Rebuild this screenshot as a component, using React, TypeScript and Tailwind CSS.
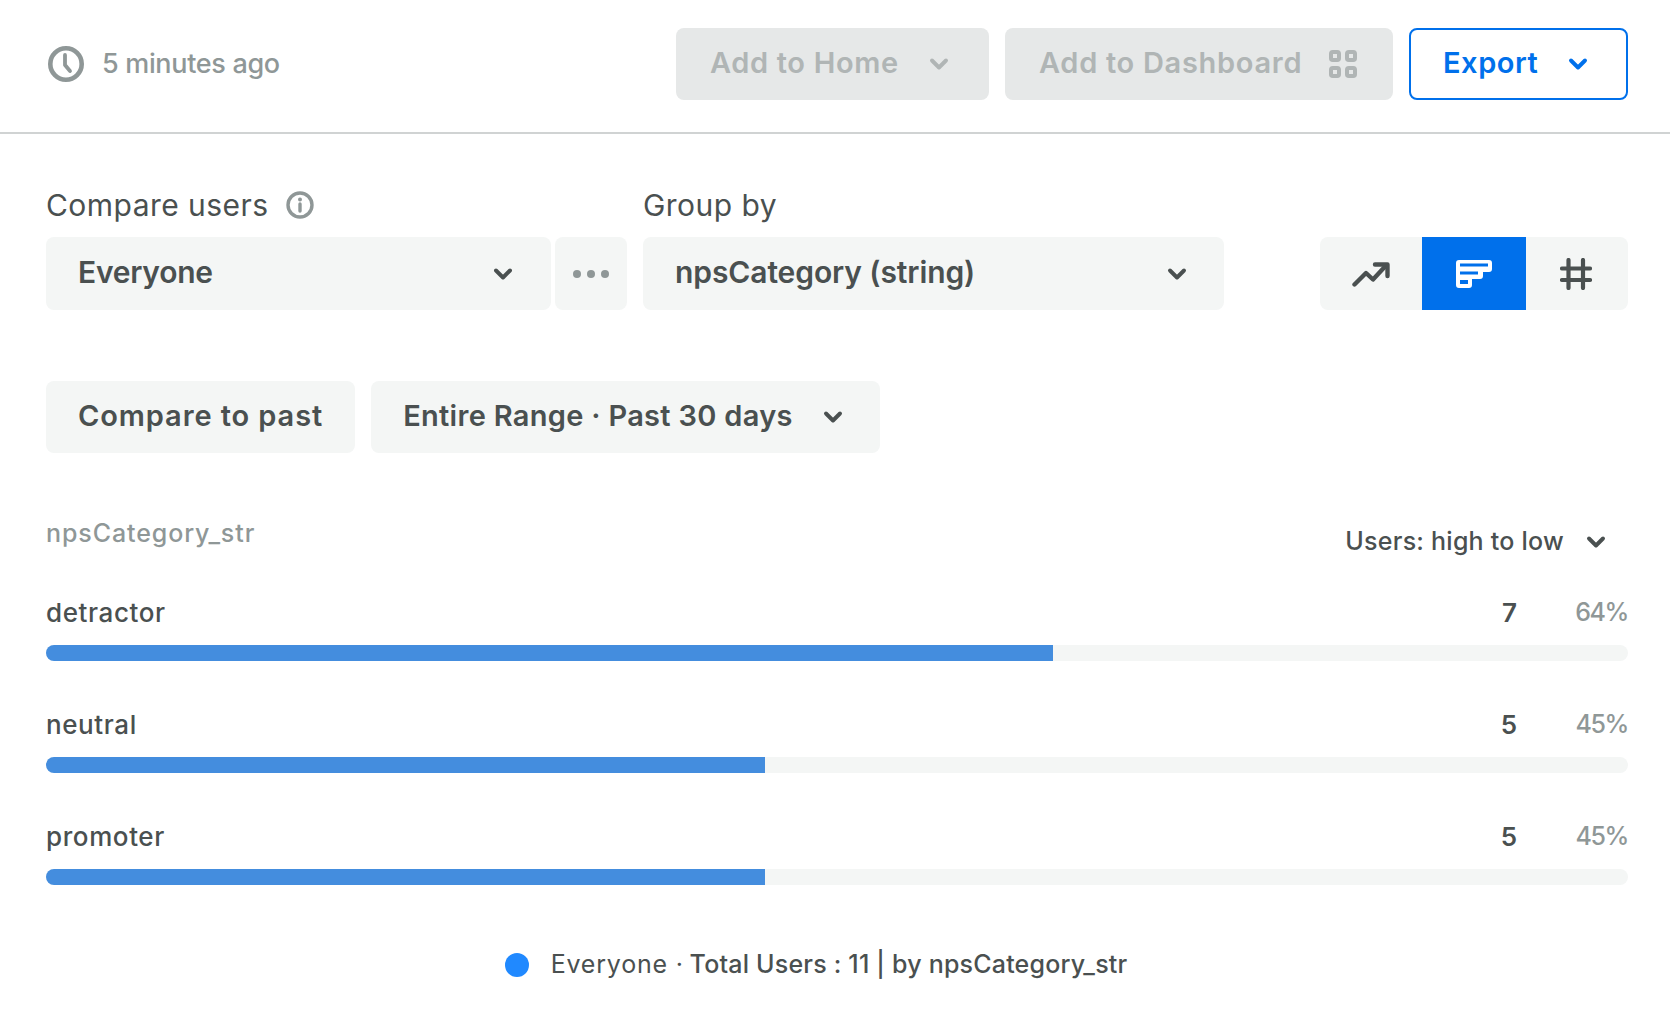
import React from "react";

const Chevron = ({ className = "" }: { className?: string }) => (
  <svg width="20" height="14" viewBox="0 0 20 14" fill="none" className={className}>
    <path d="M3 3.5 L10 10.5 L17 3.5" stroke="currentColor" strokeWidth="3.9" strokeLinecap="round" strokeLinejoin="round" />
  </svg>
);

const Row = ({ label, value, pct, width }: { label: string; value: string; pct: string; width: number }) => (
  <div className="mb-[47px]">
    <div className="flex items-center h-[32px] mb-[17px] text-[26px] text-[#4a5050] font-medium">
      <span className="tracking-[0.6px]">{label}</span>
      <span className="ml-auto w-[30px] text-right font-semibold">{value}</span>
      <span className="w-[111px] pt-[2px] text-right text-[25px] tracking-[-1.4px] text-[#8f9797]">{pct}</span>
    </div>
    <div className="h-[16px] rounded-full bg-[#f4f6f5] overflow-hidden">
      <div className="h-full bg-[#448dde]" style={{ width: `${width}%` }} />
    </div>
  </div>
);

export default function App() {
  return (
    <div className="w-full h-[1010px] bg-white overflow-hidden font-['Inter',sans-serif] text-[#4a5050]">
      <header className="flex items-center h-[134px] pl-[48px] pr-[42px] pb-[4px] border-b-2 border-[#d0d3d3]">
        <svg width="36" height="36" viewBox="0 0 36 36" fill="none" className="text-[#8f9797]">
          <circle cx="18" cy="18" r="15.7" stroke="currentColor" strokeWidth="4.6" />
          <path d="M17 9 V19 L22 25" stroke="currentColor" strokeWidth="3.8" strokeLinecap="round" strokeLinejoin="round" />
        </svg>
        <span className="ml-[18px] text-[27px] tracking-[-0.33px] text-[#8f9797] font-medium">5 minutes ago</span>
        <button className="ml-auto flex items-center h-[72px] w-[313px] pl-[34px] pb-[2px] rounded-[8px] bg-[#e6e8e8] text-[#b0b5b5] text-[29px] tracking-[0.65px] font-semibold">
          <span>Add to Home</span>
          <Chevron className="ml-auto mr-[40px] mt-[2px]" />
        </button>
        <button className="ml-[16px] flex items-center h-[72px] w-[388px] pl-[34px] pb-[2px] rounded-[8px] bg-[#e6e8e8] text-[#b0b5b5] text-[29px] tracking-[0.7px] font-semibold">
          <span>Add to Dashboard</span>
          <svg width="28" height="28" viewBox="0 0 28 28" fill="none" className="ml-auto mr-[36px] mt-[2px]">
            <rect x="2" y="2" width="8" height="8" rx="1.8" stroke="currentColor" strokeWidth="4" />
            <rect x="18" y="2" width="8" height="8" rx="1.8" stroke="currentColor" strokeWidth="4" />
            <rect x="2" y="18" width="8" height="8" rx="1.8" stroke="currentColor" strokeWidth="4" />
            <rect x="18" y="18" width="8" height="8" rx="1.8" stroke="currentColor" strokeWidth="4" />
          </svg>
        </button>
        <button className="ml-[16px] flex items-center h-[72px] w-[219px] pl-[32px] pb-[2px] rounded-[8px] border-2 border-[#0070eb] bg-white text-[#0070eb] text-[29px] tracking-[0.55px] font-semibold">
          <span>Export</span>
          <Chevron className="ml-auto mr-[38px] mt-[2px]" />
        </button>
      </header>

      <main className="pl-[46px] pr-[42px]">
        <div className="flex pt-[53px]">
          <div className="w-[581px]">
            <div className="flex items-center h-[36px] mb-[14px] text-[30px] tracking-[0.45px]">
              <span>Compare users</span>
              <svg width="28" height="28" viewBox="0 0 28 28" fill="none" className="ml-[18px] text-[#8f9797]">
                <circle cx="14" cy="14" r="12" stroke="currentColor" strokeWidth="3.4" />
                <circle cx="14" cy="8.5" r="2" fill="currentColor" />
                <path d="M14 13 V20" stroke="currentColor" strokeWidth="3.4" strokeLinecap="round" />
              </svg>
            </div>
            <div className="flex gap-[4px]">
              <div className="flex items-center flex-1 h-[73px] pl-[32px] pr-[38px] pb-[2px] rounded-[8px] bg-[#f4f6f5] text-[30px] tracking-[-0.25px] font-semibold">
                <span>Everyone</span>
                <Chevron className="ml-auto mt-[2px]" />
              </div>
              <div className="flex items-center justify-center gap-[6px] w-[72px] h-[73px] rounded-[8px] bg-[#f4f6f5]">
                <span className="w-[8px] h-[8px] rounded-full bg-[#8f9797]" />
                <span className="w-[8px] h-[8px] rounded-full bg-[#8f9797]" />
                <span className="w-[8px] h-[8px] rounded-full bg-[#8f9797]" />
              </div>
            </div>
          </div>
          <div className="w-[581px] ml-[16px]">
            <div className="flex items-center h-[36px] mb-[14px] text-[30px] tracking-[0.45px]">Group by</div>
            <div className="flex items-center h-[73px] pl-[32px] pr-[37px] pb-[2px] rounded-[8px] bg-[#f4f6f5] text-[30px] tracking-[-0.1px] font-semibold">
              <span>npsCategory (string)</span>
              <Chevron className="ml-auto mt-[2px]" />
            </div>
          </div>
          <div className="ml-auto self-end flex w-[308px] h-[73px] rounded-[8px] bg-[#f4f6f5] overflow-hidden">
            <div className="flex items-center justify-center w-[102px]">
              <svg width="38" height="26" viewBox="0 0 38 26" fill="none">
                <path d="M2.5 23.5 L14 12 L21 18.5 L34 4.5" stroke="#4a5050" strokeWidth="4.4" strokeLinecap="round" strokeLinejoin="round" />
                <path d="M23 3.5 H35.5 V15" stroke="#4a5050" strokeWidth="4.4" strokeLinecap="round" strokeLinejoin="round" />
              </svg>
            </div>
            <div className="flex items-center justify-center w-[104px] bg-[#0070eb]">
              <svg width="36" height="28" viewBox="0 0 36 28" fill="none">
                <path d="M3 0 H33 Q36 0 36 3 V9 Q36 12 33 12 H27 V16 Q27 19 24 19 H16 V25 Q16 28 13 28 H3 Q0 28 0 25 V3 Q0 0 3 0 Z" fill="#ffffff" />
                <rect x="4" y="3.5" width="28" height="3" fill="#0070eb" />
                <rect x="4" y="11.5" width="18" height="3" fill="#0070eb" />
                <rect x="4" y="20" width="8" height="4" fill="#0070eb" />
              </svg>
            </div>
            <div className="flex items-center justify-center flex-1 pr-[2px]">
              <svg width="32" height="32" viewBox="0 0 32 32" fill="none">
                <path d="M8.5 2 V30 M23 2 V30 M2 10.5 H30 M2 22 H30" stroke="#4a5050" strokeWidth="4.2" strokeLinecap="round" />
              </svg>
            </div>
          </div>
        </div>

        <div className="flex gap-[16px] mt-[71px]">
          <div className="flex items-center h-[72px] px-[32px] pb-[2px] rounded-[8px] bg-[#f4f6f5] text-[29px] tracking-[0.9px] font-semibold">Compare to past</div>
          <div className="flex items-center h-[72px] w-[509px] pl-[32px] pr-[37px] pb-[2px] rounded-[8px] bg-[#f4f6f5] text-[29px] tracking-[0.3px] font-semibold">
            <span>Entire Range · Past 30 days</span>
            <Chevron className="ml-auto mt-[2px]" />
          </div>
        </div>

        <div className="flex items-start justify-between mt-[64px] mb-[38px]">
          <span className="h-[32px] leading-[32px] text-[25px] tracking-[0.9px] text-[#8f9797] font-medium">npsCategory_str</span>
          <div className="flex items-center h-[32px] mt-[9px] pr-[22px] text-[25px] tracking-[0.24px] font-medium">
            <span>Users: high to low</span>
            <Chevron className="ml-[22px]" />
          </div>
        </div>

        <Row label="detractor" value="7" pct="64%" width={63.66} />
        <Row label="neutral" value="5" pct="45%" width={45.46} />
        <Row label="promoter" value="5" pct="45%" width={45.46} />

        <div className="flex items-center justify-center h-[32px] mt-[64px] pr-[42px] text-[25px] font-medium">
          <span className="w-[24px] h-[24px] rounded-full bg-[#2089ff] mr-[22px]" />
          <span className="font-normal tracking-[0.8px] -mr-[2px]">Everyone ·&nbsp;</span>
          <span className="tracking-[0.2px]">Total Users : 11 | by npsCategory_str</span>
        </div>
      </main>
    </div>
  );
}
